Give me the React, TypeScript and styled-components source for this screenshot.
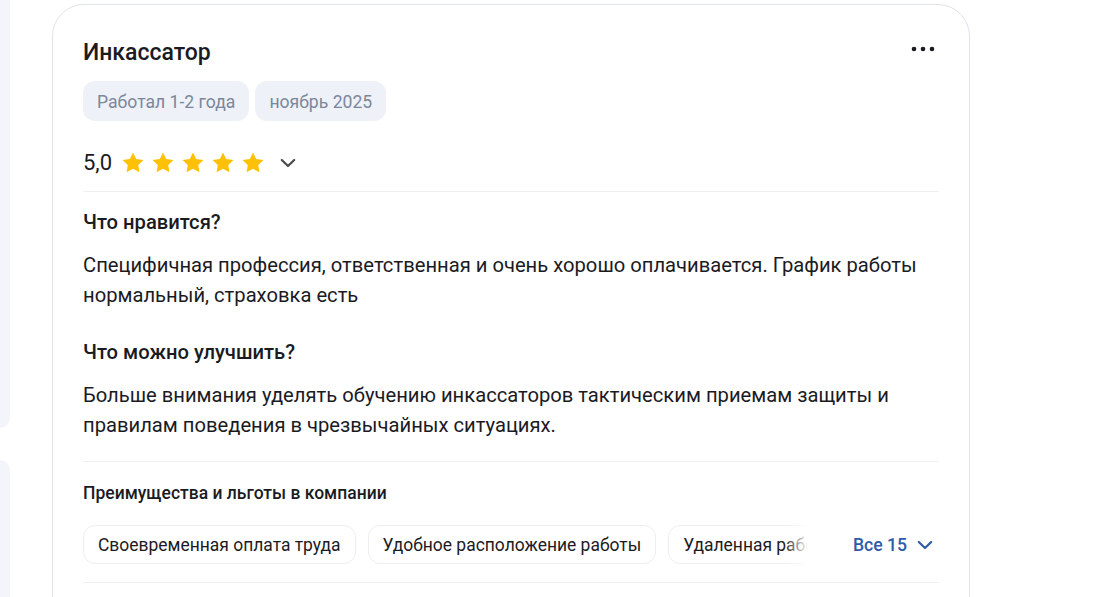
import React from 'react'
import styled, { createGlobalStyle } from 'styled-components'

const GlobalStyle = createGlobalStyle`
  body {
    margin: 0;
    background: #ffffff;
    font-family: Roboto, "Liberation Sans", Arial, sans-serif;
    color: #1b1b1f;
  }
`

const benefits = [
  'Своевременная оплата труда',
  'Удобное расположение работы',
  'Удаленная работа',
  'Белая зарплата',
]

const App: React.FC = () => {
  return (
    <>
      <GlobalStyle />
      <Page>
        <SideRail>
          <SideCard $height={468} />
          <SideCard $height={400} />
        </SideRail>
        <Card>
          <TitleRow>
            <Title>Инкассатор</Title>
            <MoreButton aria-label="Ещё">
              <svg width="24" height="24" viewBox="0 0 24 24">
                <circle cx="3" cy="12" r="2.3" fill="#1b1b1f" />
                <circle cx="12" cy="12" r="2.3" fill="#1b1b1f" />
                <circle cx="21" cy="12" r="2.3" fill="#1b1b1f" />
              </svg>
            </MoreButton>
          </TitleRow>
          <Tags>
            <Tag>Работал 1-2 года</Tag>
            <Tag>ноябрь 2025</Tag>
          </Tags>
          <RatingRow>
            <Score>5,0</Score>
            <Stars>
              {[0, 1, 2, 3, 4].map(i => (
                <svg key={i} width="26" height="26" viewBox="0 0 24 24">
                  <path
                    d="M12 2.2l2.95 6.1 6.75.9-4.9 4.7 1.2 6.7L12 17.4l-6 3.2 1.2-6.7-4.9-4.7 6.75-.9L12 2.2z"
                    fill="#ffc107"
                  />
                </svg>
              ))}
            </Stars>
            <Chevron width="16" height="10" viewBox="0 0 16 10" $color="#4a4a4f" $gap={14}>
              <path d="M1.8 2l6.2 6 6.2-6" />
            </Chevron>
          </RatingRow>
          <Divider $top={14} />
          <Section>
            <SectionTitle>Что нравится?</SectionTitle>
            <SectionText>
              Специфичная профессия, ответственная и очень хорошо оплачивается. График работы
              нормальный, страховка есть
            </SectionText>
          </Section>
          <Section>
            <SectionTitle>Что можно улучшить?</SectionTitle>
            <SectionText>
              Больше внимания уделять обучению инкассаторов тактическим приемам защиты и
              правилам поведения в чрезвычайных ситуациях.
            </SectionText>
          </Section>
          <Divider $top={21} />
          <BenefitsTitle>Преимущества и льготы в компании</BenefitsTitle>
          <BenefitsRow>
            <ChipsViewport>
              {benefits.map(b => (
                <Chip key={b}>{b}</Chip>
              ))}
            </ChipsViewport>
            <ShowAll>
              Все 15
              <Chevron width="16" height="10" viewBox="0 0 16 10" $color="#2f5ca8" $gap={10}>
                <path d="M1.8 2l6.2 6 6.2-6" />
              </Chevron>
            </ShowAll>
          </BenefitsRow>
          <Divider $top={18} />
        </Card>
      </Page>
    </>
  )
}

const Page = styled.div`
  display: flex;
  align-items: flex-start;
  height: 597px;
  overflow: hidden;
`
const SideRail = styled.div`
  width: 10px;
  flex-shrink: 0;
  margin-top: -40px;
  display: flex;
  flex-direction: column;
  gap: 32px;
`
const SideCard = styled.div<{ $height: number }>`
  height: ${p => p.$height}px;
  background: #f4f5fa;
  border-radius: 0 24px 24px 0;
`
const Card = styled.article`
  box-sizing: border-box;
  width: 918px;
  min-height: 700px;
  margin: 4px 0 0 42px;
  padding: 34px 30px 0;
  border: 1px solid #dfe3ea;
  border-radius: 32px;
  background: #fff;
`
const TitleRow = styled.div`
  display: flex;
  justify-content: space-between;
  align-items: flex-start;
  height: 28px;
`
const Title = styled.h2`
  margin: 0;
  font-size: 23px;
  line-height: 28px;
  font-weight: 500;
`
const MoreButton = styled.button`
  display: flex;
  padding: 0;
  margin: -2px 4px 0 0;
  border: 0;
  background: none;
  cursor: pointer;
`
const Tags = styled.div`
  display: flex;
  gap: 6px;
  margin-top: 14px;
`
const Tag = styled.span`
  display: inline-flex;
  align-items: center;
  height: 40px;
  padding: 1px 14px 0;
  box-sizing: border-box;
  border-radius: 12px;
  background: #eef1f7;
  color: #7b879b;
  font-size: 17.6px;
`
const RatingRow = styled.div`
  display: flex;
  align-items: center;
  height: 28px;
  margin-top: 28px;
`
const Score = styled.span`
  font-size: 22px;
  line-height: 28px;
`
const Stars = styled.div`
  display: flex;
  gap: 4px;
  margin-left: 8px;
`
const Chevron = styled.svg<{ $color: string; $gap: number }>`
  margin-left: ${p => p.$gap}px;
  fill: none;
  stroke: ${p => p.$color};
  stroke-width: 2.2;
  stroke-linecap: round;
  stroke-linejoin: round;
`
const Divider = styled.hr<{ $top: number }>`
  margin: ${p => p.$top}px 0 0;
  height: 1px;
  border: 0;
  background: #eef0f3;
`
const Section = styled.section`
  margin-top: 18px;
  & + & {
    margin-top: 30px;
  }
`
const SectionTitle = styled.h3`
  margin: 0;
  font-size: 20.2px;
  line-height: 24px;
  font-weight: 500;
`
const SectionText = styled.p`
  margin: 16px 0 0;
  font-size: 20.2px;
  line-height: 30px;
`
const BenefitsTitle = styled.h4`
  margin: 21px 0 0;
  font-size: 17.5px;
  line-height: 20px;
  font-weight: 500;
`
const BenefitsRow = styled.div`
  display: flex;
  align-items: center;
  margin-top: 22px;
`
const ChipsViewport = styled.div`
  position: relative;
  display: flex;
  gap: 12px;
  width: 725px;
  overflow: hidden;
  &::after {
    content: '';
    position: absolute;
    top: 0;
    right: 0;
    bottom: 0;
    width: 24px;
    background: linear-gradient(to right, rgba(255, 255, 255, 0), #fff);
  }
`
const Chip = styled.span`
  flex-shrink: 0;
  display: inline-flex;
  align-items: center;
  box-sizing: border-box;
  height: 39px;
  padding: 0 14px;
  border: 1px solid #eceef2;
  border-radius: 12px;
  font-size: 17.45px;
  white-space: nowrap;
`
const ShowAll = styled.button`
  display: flex;
  align-items: center;
  margin-left: auto;
  margin-right: 6px;
  padding: 0;
  border: 0;
  background: none;
  color: #2f5ca8;
  font-family: inherit;
  font-size: 17.6px;
  font-weight: 500;
  cursor: pointer;
`

export default App
